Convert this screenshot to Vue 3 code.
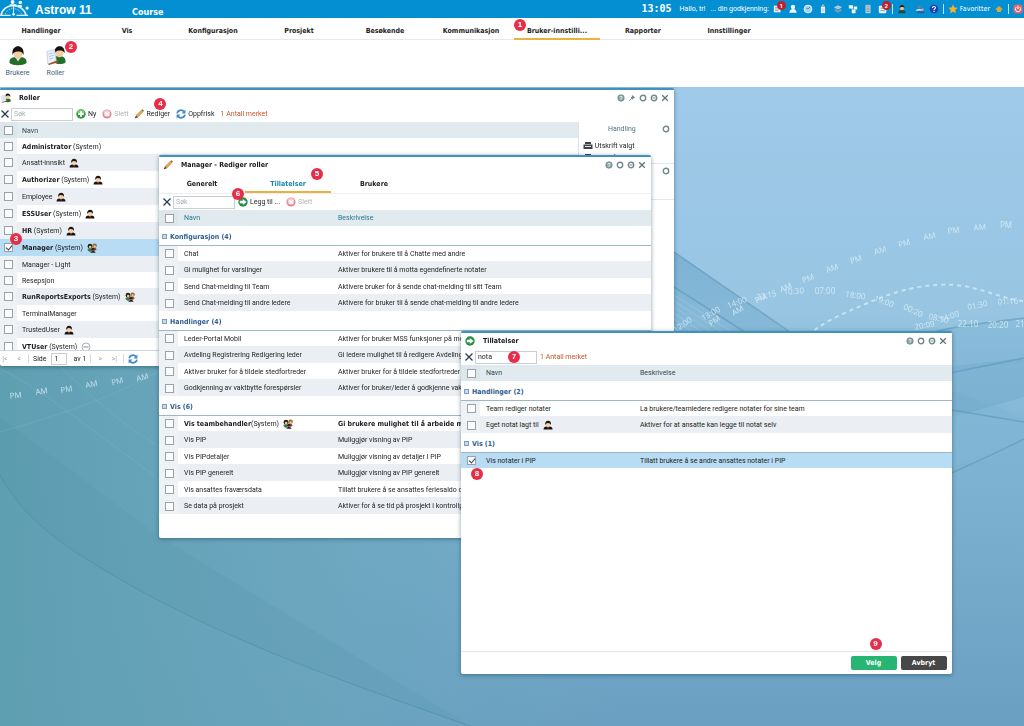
<script setup>
import { ref } from 'vue'

const navItems = ['Handlinger', 'Vis', 'Konfigurasjon', 'Prosjekt', 'Besøkende', 'Kommunikasjon', 'Bruker-innstilli...', 'Rapporter', 'Innstillinger']
const activeNav = ref(6)

const roles = ref([
  { name: 'Administrator', system: true },
  { name: 'Ansatt-innsikt', icon: 'person' },
  { name: 'Authorizer', system: true, icon: 'person' },
  { name: 'Employee', icon: 'person' },
  { name: 'ESSUser', system: true, icon: 'person' },
  { name: 'HR', system: true, icon: 'person' },
  { name: 'Manager', system: true, icon: 'team', checked: true },
  { name: 'Manager - Light' },
  { name: 'Resepsjon' },
  { name: 'RunReportsExports', system: true, icon: 'team' },
  { name: 'TerminalManager' },
  { name: 'TrustedUser', icon: 'person' },
  { name: 'VTUser', system: true, icon: 'face' }
])

const permissions = ref([
  {
    title: 'Konfigurasjon (4)',
    rows: [
      { name: 'Chat', text: 'Aktiver for brukere til å Chatte med andre' },
      { name: 'Gi mulighet for varslinger', text: 'Aktiver brukere til å motta egendefinerte notater' },
      { name: 'Send Chat-melding til Team', text: 'Aktivere bruker for å sende chat-melding til sitt Team' },
      { name: 'Send Chat-melding til andre ledere', text: 'Aktivere for bruker til å sende chat-melding til andre ledere' }
    ]
  },
  {
    title: 'Handlinger (4)',
    rows: [
      { name: 'Leder-Portal Mobil', text: 'Aktiver for bruker MSS funksjoner på mobil' },
      { name: 'Avdeling Registrering Redigering leder', text: 'Gi ledere mulighet til å redigere Avdeling' },
      { name: 'Aktiver bruker for å tildele stedfortreder', text: 'Aktiver bruker for å tildele stedfortreder' },
      { name: 'Godkjenning av vaktbytte forespørsler', text: 'Aktiver for bruker/leder å godkjenne vakt' }
    ]
  },
  {
    title: 'Vis (6)',
    rows: [
      { name: 'Vis teambehandler', system: true, icon: 'team', text: 'Gi brukere mulighet til å arbeide med' },
      { name: 'Vis PIP', text: 'Muliggjør visning av PIP' },
      { name: 'Vis PIPdetaljer', text: 'Muliggjør visning av detaljer I PIP' },
      { name: 'Vis PIP generelt', text: 'Muliggjør visning av PIP generelt' },
      { name: 'Vis ansattes fraværsdata', text: 'Tillatt brukere å se ansattes feriesaldo og' },
      { name: 'Se data på prosjekt', text: 'Aktiver for å se tid på prosjekt i kontrollp' }
    ]
  }
])

const matches = ref([
  {
    title: 'Handlinger (2)',
    rows: [
      { name: 'Team rediger notater', text: 'La brukere/teamledere redigere notater for sine team' },
      { name: 'Eget notat lagt til', icon: 'person', text: 'Aktiver for at ansatte kan legge til notat selv' }
    ]
  },
  {
    title: 'Vis (1)',
    rows: [
      { name: 'Vis notater i PIP', text: 'Tillatt brukere å se andre ansattes notater i PIP', checked: true }
    ]
  }
])

const roleSearch = ref('')
const permSearch = ref('')
const matchSearch = ref('nota')
const page = ref('1')

const arcMarks = [
  [16, 311, 'PM', -6], [42, 307, 'AM', -10], [67, 305, 'PM', -10], [92, 300, 'AM', -12], [118, 297, 'PM', -14], [143, 293, 'AM', -14],
  [716, 236, 'PM', -35], [739, 226, 'AM', -30], [762, 214, 'PM', -25], [787, 203, 'AM', -24], [809, 194, 'PM', -22],
  [833, 184, 'AM', -20], [857, 175, 'PM', -20], [881, 166, 'AM', -16], [905, 159, 'PM', -15], [930, 152, 'AM', -12],
  [954, 146, 'PM', -8], [980, 143, 'AM', -4], [1006, 141, 'PM', 0]
]
const timeMarks = [
  [684, 240, '12:00', -35], [712, 229, '13:00', -30], [738, 218, '14:00', -22], [767, 211, '23:15', -12], [794, 207, '10:30', -4], [825, 207, '07:00', 0],
  [855, 211, '18:00', 8], [883, 217, '19:00', 20], [912, 226, '00:20', 25], [938, 234, '08:30', 12], [950, 232, '14:00', -18],
  [978, 221, '01:30', -12], [1008, 217, '01:16', -3], [925, 241, '20:09', -10], [968, 240, '22:10', 0], [998, 241, '20:20', 0], [1020, 240, '21', 0]
]
</script>

<template>
  <svg class="defs" aria-hidden="true">
    <symbol id="i-person" viewBox="0 0 10 10">
      <path d="M0.5 9.5C0.5 7 2 6.5 5 6.5S9.5 7 9.5 9.5Z" fill="#161616" />
      <path d="M4 6.5h2.2L5 9Z" fill="#e33b2e" />
      <ellipse cx="5" cy="4" rx="2.3" ry="2.9" fill="#f3d3ac" />
      <path d="M2.2 5.200C1.200 -.4 8.800 -.8 8 5C7.500 3.800 6.800 3 4.600 3C3.400 3.100 2.800 4 2.200 5.200Z" fill="#1c1513" />
    </symbol>
    <symbol id="i-team" viewBox="0 0 10 10">
      <circle cx="3" cy="3.2" r="2.4" fill="#2a211c" /><circle cx="7.6" cy="2.6" r="2.2" fill="#8d6c2a" />
      <circle cx="3.2" cy="4" r="1.3" fill="#eec79b" /><circle cx="7.6" cy="3.4" r="1.1" fill="#f1d4a8" />
      <path d="M0.4 6C2 5 4 5 5 7L3.4 9C1.6 8.6 0.6 7.6 0.4 6Z" fill="#3c7c3c" />
      <path d="M6 5.4C8 4.6 9.4 5 9.6 6.6L7.6 8Z" fill="#a8382b" />
      <circle cx="5.8" cy="6.2" r="1.6" fill="#2c211b" /><path d="M3.4 9.8C3.6 7.8 8 7.2 8.6 9.8Z" fill="#20201f" />
    </symbol>
    <symbol id="i-face" viewBox="0 0 10 10">
      <circle cx="5" cy="5" r="4" fill="#fff" stroke="#99a" stroke-width=".8" /><path d="M2.5 5h5" stroke="#889" />
    </symbol>
    <symbol id="i-user" viewBox="0 0 20 20">
      <path d="M1.500 17.500C1 12.500 4 11.500 10 11.500S19 12.500 18.500 17.500C15 20.500 5 20.500 1.500 17.500Z" fill="#236f2a" />
      <path d="M7.600 12h5L10 16Z" fill="#e9efe4" />
      <ellipse cx="10" cy="8.600" rx="4.300" ry="5" fill="#f2cfa2" />
      <path d="M4.600 9.500C2.500-2 17.500-2.200 15.400 9.500C14.500 7.500 14 6 10 6C6.500 6.100 5.200 7.500 4.600 9.500Z" fill="#17120f" />
    </symbol>
    <symbol id="i-role" viewBox="0 0 20 20">
      <path d="M7 16C6 11 9 10.500 13 10.500S20 12 19.500 17C16 19.500 10 19 7 16Z" fill="#236f2a" />
      <ellipse cx="13.500" cy="7.400" rx="4" ry="4.400" fill="#f2cfa2" />
      <path d="M8.600 8C7.500-1.500 19.500-1.500 18.600 7.500C17 5.500 16 5 13 5.100C10.600 5.300 9.600 6.500 8.600 8Z" fill="#17120f" />
      <path d="M0.800 6L8.500 4L10.500 16L1.800 18.500Z" fill="#eaf1fa" stroke="#b9c8da" stroke-width=".7" />
      <path d="M2.500 8.500l5-1.200M3 11l5-1.200M3.400 13.500l4-1" stroke="#a8bfdb" stroke-width=".8" />
      <path d="M2 18.500L12 14.500L11.500 17L3 19.500Z" fill="#a5512a" />
    </symbol>
    <symbol id="i-plus" viewBox="0 0 10 10">
      <circle cx="5" cy="5" r="4.700" fill="#2f9c3c" /><ellipse cx="5" cy="3.300" rx="3.400" ry="2.200" fill="#7ccf7d" /><path d="M5 2.300v5.400M2.300 5h5.400" stroke="#fff" stroke-width="1.800" />
    </symbol>
    <symbol id="i-del" viewBox="0 0 10 10">
      <circle cx="5" cy="5" r="4.600" fill="#df8d99" /><circle cx="5" cy="4.200" r="3.200" fill="#f3cbd0" /><path d="M3.200 3.200l3.600 3.600M6.800 3.200L3.200 6.800" stroke="#fff" stroke-width="1.500" />
    </symbol>
    <symbol id="i-pen" viewBox="0 0 10 10">
      <path d="M2 6.500L7.500 1L9.200 2.600L3.800 8.200Z" fill="#e9a94b" stroke="#9b6a2c" stroke-width=".4" />
      <path d="M2 6.500L0.600 9.600L3.800 8.200Z" fill="#4a3a2c" /><path d="M7.500 1L8.500.2L9.900 1.700L9.200 2.600Z" fill="#7f5a3c" />
    </symbol>
    <symbol id="i-refresh" viewBox="0 0 10 10">
      <path d="M1.200 4.400C1.600 1 6 .2 7.900 2.600M8.800 5.600C8.400 9 4 9.800 2.100 7.400" fill="none" stroke="#3f88c9" stroke-width="1.700" />
      <path d="M9.400.6v3.800H5.600ZM.6 9.400V5.600h3.800Z" fill="#3f88c9" />
    </symbol>
    <symbol id="i-go" viewBox="0 0 10 10">
      <circle cx="5" cy="5" r="4.700" fill="#219046" /><path d="M1.800 3.800h3V2L8.600 5L4.800 8V6.200h-3Z" fill="#fff" />
    </symbol>
    <symbol id="i-cross" viewBox="0 0 10 10"><path d="M1.500 1.500l7 7M8.500 1.500l-7 7" stroke="#2a3c56" stroke-width="1.300" /></symbol>
    <symbol id="i-help" viewBox="0 0 8 8"><circle cx="4" cy="4" r="3.200" fill="#8fa9ad" stroke="#5f8087" stroke-width=".8" /><path d="M3 3.200C3 2 5.200 2 5.100 3.200C5 4 4 4 4 4.800M4 5.400v.7" fill="none" stroke="#fff" stroke-width=".8" /></symbol>
    <symbol id="i-ring" viewBox="0 0 8 8"><circle cx="4" cy="4" r="2.700" fill="#fff" stroke="#71888f" stroke-width="1.400" /></symbol>
    <symbol id="i-dash" viewBox="0 0 8 8"><circle cx="4" cy="4" r="2.700" fill="#fff" stroke="#71888f" stroke-width="1.400" /><path d="M2.500 4h3" stroke="#71888f" /></symbol>
    <symbol id="i-pin" viewBox="0 0 8 8"><path d="M4 1.200L6.800 4M4.800 2L3 4L4.400 5.200L6 3.400ZM3.400 4.600L1 7" fill="#71888f" stroke="#71888f" stroke-width=".9" /></symbol>
    <symbol id="i-close" viewBox="0 0 8 8"><path d="M1.200 1.200l5.600 5.600M6.800 1.200L1.200 6.800" stroke="#5d757c" stroke-width="1.300" /></symbol>
    <symbol id="i-printer" viewBox="0 0 10 10"><path d="M2 1h6v2H2ZM.5 3.400h9V8h-9Z" fill="#3c4247" /><path d="M2 5.500h6" stroke="#dfe4e6" /></symbol>
  </svg>

  <div class="app">
    <header class="topbar">
      <svg class="logo" viewBox="0 0 32 18" aria-hidden="true">
        <g fill="none" stroke="#d9effa">
          <path d="M1 16C3 2 24 2 27 16" stroke-width="1.800" /><path d="M5 16C7 6 20 6 23 16" stroke-width=".8" stroke-dasharray="1 1" />
          <path d="M0 15.500h11M17 15.500h12" stroke-width="1.200" /><path d="M14 5v9" stroke-width="1" />
        </g>
        <g fill="#eef9ff"><circle cx="13" cy="1.800" r="2" /><circle cx="21" cy="2.200" r="1.800" /><circle cx="28" cy="8" r="1.700" /><path d="M10 4h7v2h-7ZM19 4.500l4 1l-1 2l-4-1.500Z" /><circle cx="14" cy="14.500" r="1.400" /></g>
      </svg>
      <strong class="brand">Astrow 11</strong>
      <span class="course">Course</span>
      <div class="status">
        <time class="clock">13:05</time>
        <span class="hello">Hallo, tr! &nbsp; ... din godkjenning:</span>
        <div class="alerts">
          <button class="tool" aria-label="Meldinger"><svg viewBox="0 0 12 12"><path d="M1 2h8v8H1Z" fill="#e9f3f8" /><path d="M2.500 4h4M2.500 6h5M2.500 8h4" stroke="#7fa3b8" /></svg><span class="count">1</span></button>
          <button class="tool" aria-label="Varsler"><svg viewBox="0 0 12 12"><circle cx="6" cy="3.500" r="2.600" fill="#f4fafc" /><path d="M1.500 10.500C2 7 4 6 6 6s4 1 4.500 4.500Z" fill="#f4fafc" /></svg></button>
          <button class="tool" aria-label="Tid"><svg viewBox="0 0 12 12"><circle cx="6" cy="6" r="4.700" fill="#a9d4ec" stroke="#e6f4fa" /><path d="M6 6l2.400-2.400M6 6L4 5" stroke="#2f7da8" /></svg></button>
          <button class="tool" aria-label="Kort"><svg viewBox="0 0 12 12"><path d="M3.500 3h5v8h-5Z" fill="#e6eff4" /><path d="M5 1h2v2H5ZM4.500 6h3M4.500 8h3" fill="#9fc3d5" stroke="#9bb7c5" stroke-width=".7" /></svg></button>
          <button class="tool" aria-label="Lag"><svg viewBox="0 0 12 12"><path d="M1 4l5-2.500L11 4L6 6.500Z" fill="#b3c8d4" /><path d="M2 5.500l4 2l4-2v2.800l-4 2.400l-4-2.400Z" fill="#6f9db8" /></svg></button>
          <button class="tool" aria-label="Organisasjon"><svg viewBox="0 0 12 12"><path d="M1 1.500h5v4H1ZM7 3h4v3.500H7ZM4.500 7h4.500v4H4.500Z" fill="#f1f7fa" /><path d="M4 5l3 3" stroke="#f1f7fa" /></svg></button>
          <button class="tool" aria-label="Terminal"><svg viewBox="0 0 12 12"><path d="M3 1h6v10H3Z" fill="#c7d3da" /><path d="M4 2.500h4M4 5h4M4 7h4M4 9h4" stroke="#72848f" stroke-width=".9" /></svg></button>
          <button class="tool" aria-label="Kalender"><svg viewBox="0 0 12 12"><rect x="1" y="2" width="9" height="9" rx="1" fill="#e9f3f8" /><path d="M3 5h4M3 8h5" stroke="#668ba1" /></svg><span class="count">2</span></button>
        </div>
        <i class="bar"></i>
        <button class="tool account" aria-label="Bruker"><svg viewBox="0 0 12 12"><path d="M1.500 11C1.500 8 3 7.500 6 7.500S10.500 8 10.500 11Z" fill="#284a35" /><circle cx="6" cy="4.800" r="2.600" fill="#eebf80" /><path d="M3 5C3 0 9 0 9 5C8 3 4.500 3 3 5Z" fill="#241b16" /></svg></button>
        <button class="tool" aria-label="Personer"><svg viewBox="0 0 12 12"><circle cx="5" cy="3.500" r="2" fill="#6b7d9a" /><path d="M1 8C1 5.500 9 5.500 9 8Z" fill="#cfe0ee" /><path d="M3 8.500h8V11H3Z" fill="#2d5f9c" /><circle cx="9" cy="7" r="1.500" fill="#d7a3a3" /></svg></button>
        <button class="tool" aria-label="Hjelp"><svg viewBox="0 0 12 12"><circle cx="6" cy="6" r="5.200" fill="#1f3fae" /><path d="M4.200 4.800C4 2.500 8 2.500 7.800 4.600C7.700 6 6 5.800 6 7.400M6 8.300v1.300" stroke="#fff" stroke-width="1.300" fill="none" /></svg></button>
        <i class="bar"></i>
        <a class="fav" href="#"><svg class="star" viewBox="0 0 12 12" aria-hidden="true"><path d="M6 .5l1.700 3.600l3.900.5L8.700 7.300l.8 3.900L6 9.300l-3.500 1.900l.8-3.900L.4 4.600l3.900-.5Z" fill="#f6b12f" /></svg>Favoritter</a>
        <button class="tool" aria-label="Opp"><svg viewBox="0 0 12 12"><path d="M6 2.500L11 7H8.500v2.500h-5V7H1Z" fill="#d9a941" /></svg></button>
        <i class="bar"></i>
        <button class="tool" aria-label="Logg ut"><svg viewBox="0 0 12 12"><rect x=".5" y=".5" width="11" height="11" rx="3" fill="#e0626b" /><path d="M4 3.600a3.200 3.200 0 1 0 4 0M6 2v4" stroke="#fff" stroke-width="1.200" fill="none" /></svg></button>
      </div>
    </header>

    <nav class="menu">
      <a v-for="(item, i) in navItems" :key="item" href="#" :class="{ active: i === activeNav }" @click.prevent="activeNav = i">{{ item }}<b v-if="i === 6" class="step s1">1</b></a>
    </nav>

    <div class="ribbon">
      <button><svg><use href="#i-user" /></svg>Brukere</button>
      <button><svg><use href="#i-role" /></svg>Roller<b class="step s2">2</b></button>
    </div>

    <main class="desktop">
      <svg class="wallpaper" viewBox="0 0 1024 639" preserveAspectRatio="none" aria-hidden="true">
        <defs>
          <linearGradient id="sky" x1="0" y1="0" x2="0" y2="1"><stop offset="0" stop-color="#9fcae9" /><stop offset=".35" stop-color="#97c5e2" /><stop offset=".55" stop-color="#80b5d4" /><stop offset="1" stop-color="#6b9fc2" /></linearGradient>
          <linearGradient id="sea" x1="0" y1="0" x2="1" y2="0"><stop offset="0" stop-color="#5f9fb2" /><stop offset=".3" stop-color="#68a5bb" stop-opacity=".8" /><stop offset=".62" stop-color="#6ba5bd" stop-opacity="0" /></linearGradient>
          <linearGradient id="fold" x1="0" y1="0" x2="0" y2="1"><stop offset="0" stop-color="#5f9cc0" stop-opacity=".5" /><stop offset="1" stop-color="#7cb2d1" stop-opacity="0" /></linearGradient>
        </defs>
        <rect width="1024" height="639" fill="url(#sky)" />
        <rect y="240" width="1024" height="399" fill="url(#sea)" />
        <path d="M660 155L790 245L1024 330V420L660 250Z" fill="url(#fold)" />
        <path d="M900 285L1024 271V310L900 345Z" fill="#5d99bc" opacity=".25" />
        <path d="M900 315L1024 337V352L900 400Z" fill="#82b7d5" opacity=".5" />
        <path d="M910 250C950 238 980 236 1024 231V275L900 290Z" fill="#74acd0" opacity=".3" />
        <g fill="none" stroke="#578fb3" stroke-width="1.500" opacity=".5">
          <path d="M674 165L790 245M674 200L745 245M950 286L1024 271M940 321L1024 335M940 391C970 378 1000 364 1024 352M920 250C950 238 990 236 1024 231" />
        </g>
        <g fill="none" stroke="#c1dfef" stroke-width=".6" opacity=".45">
          <path d="M674 208l58 37M674 214l48 31M674 220l38 25M674 226l28 19M674 232l18 13" />
        </g>
        <path d="M0 388C16 418 40 442 80 468C200 545 330 590 470 639" fill="none" stroke="#4585a0" opacity=".45" />
        <path d="M0 388C16 418 40 442 80 468C200 545 330 590 470 639L160 450L0 330Z" fill="#4c8ca0" opacity=".14" />
        <path d="M0 345C90 320 130 300 170 279M60 279C100 320 140 350 180 372M0 282C40 300 100 350 170 400" fill="none" stroke="#82b9c8" stroke-width=".8" opacity=".4" />
        <path d="M808 248C830 230 855 222 870 215C900 202 930 196 955 198C980 200 1002 212 1024 214" fill="none" stroke="#d8edf7" stroke-width="2" stroke-dasharray="4 4" opacity=".75" />
        <g class="marks">
          <text v-for="(m, i) in arcMarks" :key="'a' + i" :transform="`translate(${m[0]} ${m[1]}) rotate(${m[3]})`">{{ m[2] }}</text>
          <text v-for="(m, i) in timeMarks" :key="'t' + i" :transform="`translate(${m[0]} ${m[1]}) rotate(${m[3]})`">{{ m[2] }}</text>
        </g>
      </svg>

      <section class="window w-roles">
        <div class="titlebar">
          <svg class="ico"><use href="#i-role" /></svg><h2>Roller</h2>
          <div class="winbtns">
            <button aria-label="Hjelp"><svg><use href="#i-help" /></svg></button><button aria-label="Fest"><svg><use href="#i-pin" /></svg></button><button aria-label="Minimer"><svg><use href="#i-ring" /></svg></button><button aria-label="Maksimer"><svg><use href="#i-dash" /></svg></button><button aria-label="Lukk"><svg><use href="#i-close" /></svg></button>
          </div>
        </div>
        <div class="toolbar">
          <button class="clear" aria-label="Tøm søk"><svg class="ico"><use href="#i-cross" /></svg></button>
          <input v-model="roleSearch" class="search" type="text" placeholder="Søk" aria-label="Søk i roller" />
          <button><svg class="ico"><use href="#i-plus" /></svg>Ny</button>
          <button class="off"><svg class="ico"><use href="#i-del" /></svg>Slett</button>
          <button><svg class="ico"><use href="#i-pen" /></svg>Rediger<b class="step s4">4</b></button>
          <button><svg class="ico"><use href="#i-refresh" /></svg>Oppfrisk</button>
          <span class="marked">1 Antall merket</span>
        </div>
        <div class="split">
          <div class="list">
            <table class="roles">
              <thead><tr><th class="ck"><input type="checkbox" aria-label="Velg alle roller" /></th><th>Navn</th></tr></thead>
              <tbody>
                <tr v-for="r in roles" :key="r.name" :class="{ chosen: r.checked, tall: r.icon }">
                  <td class="ck"><input v-model="r.checked" type="checkbox" :aria-label="r.name" /></td>
                  <td><span class="cell"><span><strong v-if="r.system">{{ r.name }}</strong><template v-else>{{ r.name }}</template><template v-if="r.system"> (System)</template></span><svg v-if="r.icon" class="who"><use :href="'#i-' + r.icon" /></svg></span></td>
                </tr>
              </tbody>
            </table>
            <b class="step s3">3</b>
          </div>
          <aside class="side">
            <div class="panel first">
              <h3>Handling</h3><svg class="ring"><use href="#i-ring" /></svg>
              <button><svg class="ico"><use href="#i-printer" /></svg>Utskrift valgt</button>
              <button><svg class="ico"><use href="#i-printer" /></svg>Utskrift alle</button>
            </div>
            <div class="panel"><svg class="ring"><use href="#i-ring" /></svg></div>
          </aside>
        </div>
        <div class="pager">
          <button aria-label="Første side">|&lt;</button><button aria-label="Forrige side">&lt;</button><i></i>
          <label for="page">Side</label><input id="page" v-model="page" type="text" /><span class="total">av 1</span><i></i>
          <button aria-label="Neste side">&gt;</button><button aria-label="Siste side">&gt;|</button><i></i>
          <button aria-label="Oppfrisk"><svg class="ico"><use href="#i-refresh" /></svg></button>
        </div>
      </section>

      <section class="window w-edit">
        <div class="titlebar">
          <svg class="ico"><use href="#i-pen" /></svg><h2>Manager - Rediger roller</h2>
          <div class="winbtns">
            <button aria-label="Hjelp"><svg><use href="#i-help" /></svg></button><button aria-label="Minimer"><svg><use href="#i-ring" /></svg></button><button aria-label="Maksimer"><svg><use href="#i-dash" /></svg></button><button aria-label="Lukk"><svg><use href="#i-close" /></svg></button>
          </div>
        </div>
        <div class="tabs">
          <button>Generelt</button><button class="active">Tillatelser<b class="step s5">5</b></button><button>Brukere</button>
        </div>
        <div class="toolbar">
          <button class="clear" aria-label="Tøm søk"><svg class="ico"><use href="#i-cross" /></svg></button>
          <input v-model="permSearch" class="search" type="text" placeholder="Søk" aria-label="Søk i tillatelser" />
          <button><svg class="ico"><use href="#i-go" /></svg>Legg til ...<b class="step s6">6</b></button>
          <button class="off"><svg class="ico"><use href="#i-del" /></svg>Slett</button>
        </div>
        <table class="perms teal">
          <thead><tr><th class="ck"><input type="checkbox" aria-label="Velg alle tillatelser" /></th><th class="nm">Navn</th><th>Beskrivelse</th></tr></thead>
          <tbody v-for="g in permissions" :key="g.title">
            <tr class="group"><th colspan="3"><i class="fold"></i>{{ g.title }}</th></tr>
            <tr v-for="r in g.rows" :key="r.name">
              <td class="ck"><input type="checkbox" :aria-label="r.name" /></td>
              <td><span class="cell"><span><strong v-if="r.system">{{ r.name }}</strong><template v-else>{{ r.name }}</template><template v-if="r.system">(System)</template></span><svg v-if="r.icon" class="who"><use :href="'#i-' + r.icon" /></svg></span></td>
              <td><strong v-if="r.system">{{ r.text }}</strong><template v-else>{{ r.text }}</template></td>
            </tr>
          </tbody>
        </table>
      </section>

      <section class="window w-pick">
        <div class="titlebar">
          <svg class="ico"><use href="#i-go" /></svg><h2>Tillatelser</h2>
          <div class="winbtns">
            <button aria-label="Hjelp"><svg><use href="#i-help" /></svg></button><button aria-label="Minimer"><svg><use href="#i-ring" /></svg></button><button aria-label="Maksimer"><svg><use href="#i-dash" /></svg></button><button aria-label="Lukk"><svg><use href="#i-close" /></svg></button>
          </div>
        </div>
        <div class="toolbar">
          <button class="clear" aria-label="Tøm søk"><svg class="ico"><use href="#i-cross" /></svg></button>
          <input v-model="matchSearch" class="search" type="text" placeholder="Søk" aria-label="Søk" />
          <span class="marked">1 Antall merket</span>
          <b class="step s7">7</b>
        </div>
        <div class="results">
          <table class="perms">
            <thead><tr><th class="ck"><input type="checkbox" aria-label="Velg alle treff" /></th><th class="nm">Navn</th><th>Beskrivelse</th></tr></thead>
            <tbody v-for="g in matches" :key="g.title">
              <tr class="group"><th colspan="3"><i class="fold"></i>{{ g.title }}</th></tr>
              <tr v-for="r in g.rows" :key="r.name" :class="{ chosen: r.checked }">
                <td class="ck"><input v-model="r.checked" type="checkbox" :aria-label="r.name" /></td>
                <td><span class="cell">{{ r.name }}<svg v-if="r.icon" class="who"><use :href="'#i-' + r.icon" /></svg></span></td>
                <td>{{ r.text }}</td>
              </tr>
            </tbody>
          </table>
          <b class="step s8">8</b>
        </div>
        <div class="actions">
          <button class="ok">Velg<b class="step s9">9</b></button><button class="cancel">Avbryt</button>
        </div>
      </section>
    </main>
  </div>
</template>

<style>
body { margin: 0; }
</style>

<style scoped>
.defs { position: absolute; width: 0; height: 0; }
.app { display: flex; flex-direction: column; min-height: 100vh; font: 7px/10px Roboto, "Liberation Sans", sans-serif; color: #1b1e21; background: #fff; }
.app * { box-sizing: border-box; }
button, input { font: inherit; color: inherit; margin: 0; padding: 0; border: 0; background: none; }
button { display: flex; align-items: center; position: relative; white-space: nowrap; }
a { color: inherit; text-decoration: none; }
h2, h3 { margin: 0; font-size: 7px; }
h2, strong, .course, .menu a, .tabs button, .group th, .actions button { font-family: "DejaVu Sans Condensed", "DejaVu Sans", sans-serif; font-weight: bold; }

.topbar { display: flex; align-items: center; height: 18px; background: #048fd2; color: #fff; padding-right: 1px; }
.logo { width: 31px; height: 18px; }
.brand { font: bold 12px/18px "Liberation Sans", sans-serif; margin-left: 4px; width: 97px; padding-top: 1px; }
.course { font-size: 9px; padding-top: 6px; }
.status { display: flex; align-items: center; gap: 4px; margin-left: auto; }
.clock { font: bold 10px/10px "DejaVu Sans Mono", monospace; margin-right: 4px; }
.hello { white-space: nowrap; }
.fav { font-family: "DejaVu Sans Condensed", "DejaVu Sans", sans-serif; white-space: nowrap; }
.alerts { display: flex; gap: 5px; }
.tool svg, .star { display: block; width: 10px; height: 10px; }
.account { margin: 0 4px 0 0; }
.count { position: absolute; left: 4px; top: -3px; width: 9px; height: 9px; border-radius: 50%; background: #c0202c; color: #fff; font-weight: bold; font-size: 6px; line-height: 9px; text-align: center; }
.bar { width: 1px; height: 10px; background: #bfe2f4; }
.fav { display: flex; align-items: center; gap: 2px; }

.menu { display: flex; gap: 4px; height: 22px; border-bottom: 1px solid #e6e9eb; }
.menu a { position: relative; width: 82px; text-align: center; line-height: 26px; color: #1e1e1e; white-space: nowrap; }
.menu a.active::after { content: ""; position: absolute; left: -2px; right: -2px; bottom: -1px; height: 2px; background: #e9b23f; }
.ribbon { display: flex; height: 47px; padding: 5px 2px; gap: 7px; }
.ribbon button { flex-direction: column; width: 31px; gap: 2px; color: #3c5f80; }
.ribbon svg { width: 20px; height: 21px; }

.step { position: absolute; z-index: 2; width: 12px; height: 12px; border-radius: 50%; background: #e62e48; color: #fff; font: bold 8px/12px "Liberation Sans", sans-serif; text-align: center; }
.s1 { left: -2px; top: 1px; }
.s2 { left: 25px; top: -4px; }
.s3 { left: 10px; top: 111px; }
.s4 { left: 20px; top: -11px; }
.s5 { right: 8px; top: -5px; }
.s6 { left: -6px; top: -9px; }
.s7 { left: 47px; top: 2px; }
.s8 { left: 10px; top: 103px; }
.s9 { left: 19px; top: -18px; }

.desktop { position: relative; flex: 1; overflow: hidden; }
.wallpaper { position: absolute; width: 100%; height: 100%; }
.marks { fill: #e2f2fa; opacity: .75; font: 8px "Noto Sans", sans-serif; text-anchor: middle; }
.window { position: absolute; background: #fff; border-top: 2px solid #3e93b9; border-radius: 2px; box-shadow: 0 1px 4px rgba(20, 60, 80, .5); }
.w-roles { left: 0; top: 1px; width: calc(66% - 2px); }
.w-edit { left: 159px; top: 68px; width: 48%; padding-bottom: 24px; }
.w-pick { left: 461px; top: 244px; width: calc(48% - 1px); }
.titlebar { display: flex; align-items: center; height: 16px; padding: 0 5px 0 4px; }
.titlebar h2 { margin-left: 8px; color: #14181b; }
.w-roles .titlebar { padding-left: 1px; }
.ico { width: 10px; height: 10px; flex: none; }
.winbtns { display: flex; gap: 3px; margin-left: auto; }
.winbtns svg, .ring { width: 8px; height: 8px; }
.toolbar { display: flex; align-items: center; height: 16px; padding: 0 3px; gap: 6px; position: relative; }
.w-roles .toolbar { padding-left: 0; }
.toolbar button { gap: 2px; }
.toolbar .clear { margin-right: -5px; }
.search { width: 62px; height: 13px; padding: 0 2px; border: 1px solid #c8cfd4; outline: 0; margin-right: -3px; background: #fff; }
.search::placeholder { color: #a9b0b5; opacity: 1; }
.off { color: #b1b4b7; }
.marked { color: #c2552a; }

table { width: 100%; border-collapse: collapse; table-layout: fixed; }
th, td { padding: 0 0 0 6px; text-align: left; white-space: nowrap; font-weight: normal; }
thead tr { height: 16px; background: #e1ebef; color: #37474f; }
.teal thead tr { color: #2b7793; }
.ck { width: 19px; padding: 0; text-align: center; background: #eff2f4; }
.nm { width: 154px; }
input[type="checkbox"] { appearance: none; display: block; position: relative; width: 9px; height: 9px; margin: 0 auto; border: 1px solid #9aa2a8; background: #fbfcfd; }
.perms input[type="checkbox"] { margin-left: 6px; }
input[type="checkbox"]:checked::after { content: ""; position: absolute; left: 2px; top: 0; width: 3px; height: 5px; border: solid #35445c; border-width: 0 1px 1px 0; transform: rotate(40deg); }
thead .ck { background: #dce6eb; }
tbody tr { height: 16px; }
.perms td { padding-top: 1px; }
.perms tbody tr:nth-child(even) { background: #fff; }
.perms tbody tr:nth-child(odd) { height: 17px; background: #ebeff3; }
.perms tbody tr.group { height: 19px; background: #fff; }
.group th { padding: 4px 0 0 3px; color: #2e5c92; border-bottom: 1px solid #9db7c5; }
.fold { display: inline-block; width: 5px; height: 5px; border: 1px solid #7d9cc0; background: #c9daec; margin-right: 3px; }
.cell { display: flex; align-items: center; gap: 4px; height: 10px; }
.who { width: 10px; height: 10px; flex: none; }
.roles tbody tr.tall { height: 17px; }
.roles tbody tr:nth-child(even) { background: #ebeff3; }
.roles th, .roles td { padding-left: 5px; padding-top: 1px; }
.roles .ck { width: 17px; padding: 0; }
tbody tr.chosen, tbody tr.chosen .ck, .perms tbody tr.chosen:nth-child(even), .roles tbody tr.chosen { background: #b9dcf5; }

.split { display: flex; height: 228px; }
.list { flex: 1; overflow: hidden; position: relative; }
.side { width: 96px; border-left: 1px solid #dce2e5; }
.panel { position: relative; height: 36px; border-bottom: 1px solid #e3e7e9; }
.panel.first { height: 42px; overflow: hidden; }
.panel h3 { font-weight: normal; color: #4f7485; text-align: center; padding: 2px 9px 5px 0; line-height: 11px; }
.ring { position: absolute; right: 4px; top: 3px; }
.panel button { gap: 2px; padding-left: 4px; height: 12px; }
.pager { display: flex; align-items: center; gap: 4px; height: 16px; border-top: 1px solid #cfd6da; }
.pager i { width: 1px; height: 9px; background: #d5dade; }
.pager button { width: 10px; justify-content: center; color: #9aa1a6; }
.pager input { width: 16px; height: 12px; padding: 0 3px; border: 1px solid #c8cfd4; }
.total { margin-left: 3px; }

.tabs { display: flex; height: 21px; border-bottom: 1px solid #eceff0; }
.tabs button { width: 86px; justify-content: center; padding-top: 1px; color: #1e1e1e; }
.tabs .active { color: #1e86b0; padding-top: 3px; border-bottom: 2px solid #e9b23f; }
.results { min-height: 286px; position: relative; }
.actions { display: flex; justify-content: flex-end; gap: 4px; padding: 4px 5px 4px 0; border-top: 1px solid #e3e7e9; }
.actions button { width: 46px; height: 14px; justify-content: center; border-radius: 2px; color: #fff; }
.ok { background: #26b573; }
.cancel { background: #474747; }
</style>
